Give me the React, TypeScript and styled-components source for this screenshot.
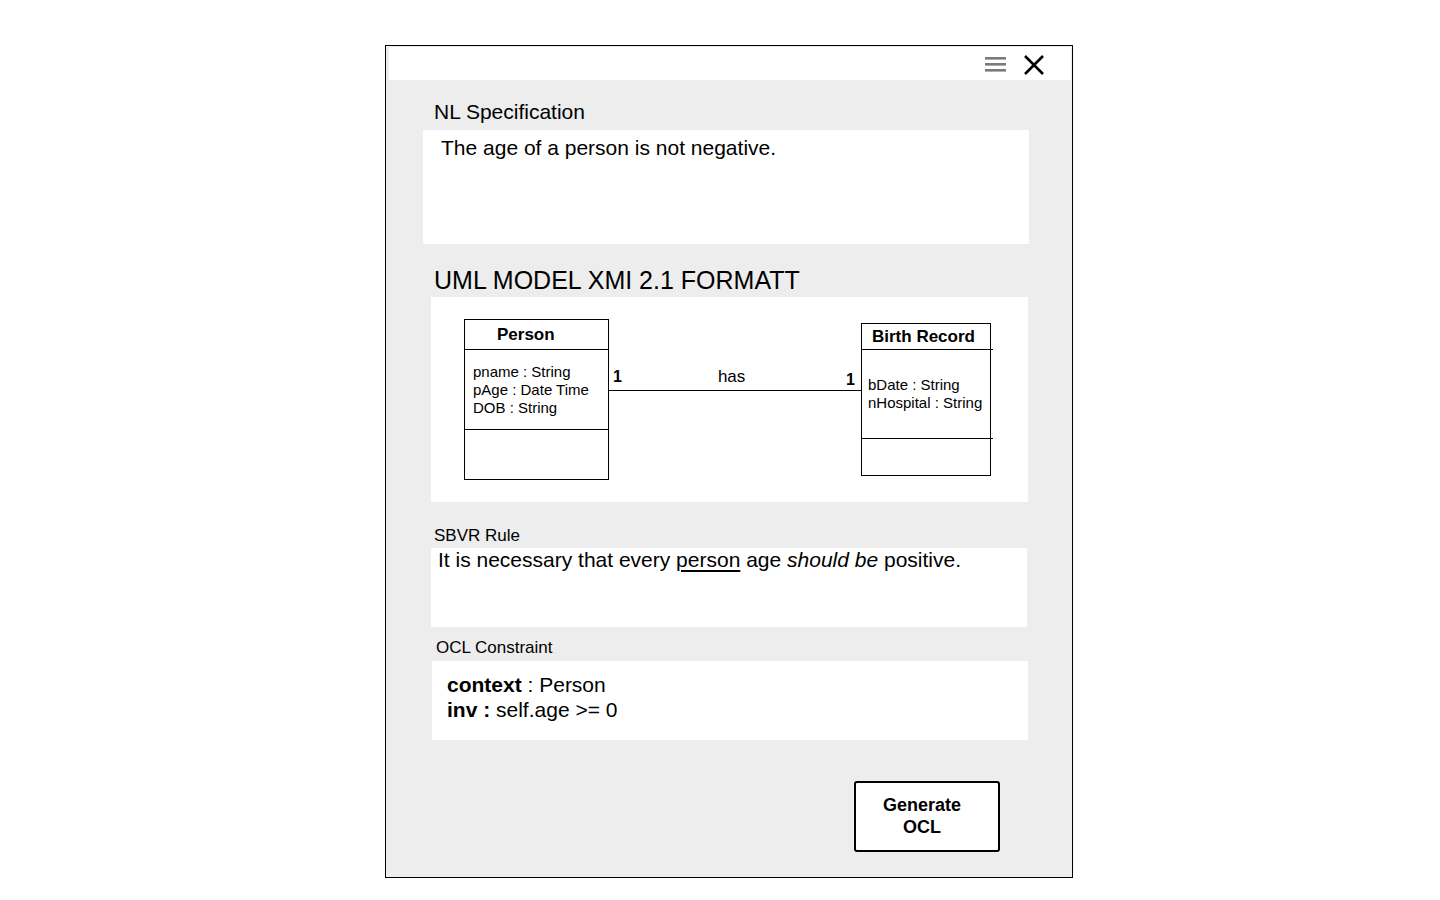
import React from 'react'
import styled, { createGlobalStyle } from 'styled-components'

const GlobalStyle = createGlobalStyle`
  html, body {
    margin: 0;
    padding: 0;
    background: #ffffff;
    font-family: "Liberation Sans", Arial, sans-serif;
    color: #000000;
  }
`

const MenuIcon = () => (
  <svg width="22" height="15" viewBox="0 0 22 15">
    <rect x="0" y="0" width="21" height="2.6" fill="#7a7a7a" />
    <rect x="0" y="6" width="21" height="2.6" fill="#7a7a7a" />
    <rect x="0" y="12" width="21" height="2.6" fill="#7a7a7a" />
  </svg>
)

const CloseIcon = () => (
  <svg width="22" height="22" viewBox="0 0 22 22">
    <path d="M2 2 L20 20 M20 2 L2 20" stroke="#000" strokeWidth="2.6" strokeLinecap="butt" />
  </svg>
)

const App: React.FC = () => {
  return (
    <Page>
      <GlobalStyle />
      <Frame>
        <TitleBar>
          <MenuIcon />
          <CloseIcon />
        </TitleBar>

        <Label size={21} indent={48} gap={20}>NL Specification</Label>
        <NlBox>The age of a person is not negative.</NlBox>

        <Label size={25} indent={48} gap={21} lh={30}>UML MODEL XMI 2.1 FORMATT</Label>
        <DiagramBox>
          <ClassBox width={145}>
            <ClassName pad={32} height={29}>Person</ClassName>
            <Attributes height={80} top={13}>
              <div>pname : String</div>
              <div>pAge : Date Time</div>
              <div>DOB : String</div>
            </Attributes>
            <Methods height={49} />
          </ClassBox>

          <Association>
            <Ends>
              <Multiplicity>1</Multiplicity>
              <RoleName>has</RoleName>
              <Multiplicity shift={3}>1</Multiplicity>
            </Ends>
            <Line />
          </Association>

          <ClassBox width={130} offset={4} overhang>
            <ClassName pad={10} height={25}>Birth Record</ClassName>
            <Attributes height={89} top={26} pad={6}>
              <div>bDate : String</div>
              <div>nHospital : String</div>
            </Attributes>
            <Methods height={36} />
          </ClassBox>
        </DiagramBox>

        <Label size={17} indent={48} gap={24} lh={20}>SBVR Rule</Label>
        <RuleBox>
          It is necessary that every <u>person</u> age <i>should be</i> positive.
        </RuleBox>

        <Label size={17} indent={50} gap={11} lh={20}>OCL Constraint</Label>
        <OclBox>
          <div><b>context</b> : Person</div>
          <div><b>inv :</b> self.age &gt;= 0</div>
        </OclBox>

        <GenerateButton>Generate<br />OCL</GenerateButton>
      </Frame>
    </Page>
  )
}

const Page = styled.div`
  padding: 45px 0 0 385px;
  height: 855px;
`

const Frame = styled.div`
  box-sizing: border-box;
  width: 688px;
  height: 833px;
  border: 1px solid #000000;
  background: #ededed;
  display: flex;
  flex-direction: column;
  align-items: flex-start;
`

const TitleBar = styled.div`
  align-self: stretch;
  height: 33px;
  margin: 1px 1px 0 3px;
  background: #ffffff;
  display: flex;
  justify-content: flex-end;
  align-items: center;
  gap: 16px;
  padding-right: 26px;

  svg:first-child {
    margin-top: 1px;
  }
  svg:last-child {
    margin-top: 3px;
  }
`

const Label = styled.div<{ size: number; indent: number; gap: number; lh?: number }>`
  font-size: ${p => p.size}px;
  line-height: ${p => p.lh || 24}px;
  margin-left: ${p => p.indent}px;
  margin-top: ${p => p.gap}px;
`

const NlBox = styled.div`
  box-sizing: border-box;
  width: 606px;
  height: 114px;
  margin: 6px 0 0 37px;
  padding: 6px 18px;
  background: #ffffff;
  font-size: 21px;
  line-height: 24px;
`

const DiagramBox = styled.div`
  box-sizing: border-box;
  width: 597px;
  height: 205px;
  margin: 2px 0 0 45px;
  padding: 22px 0 0 33px;
  background: #ffffff;
  display: flex;
  align-items: flex-start;
`

const ClassBox = styled.div<{ width: number; offset?: number; overhang?: boolean }>`
  box-sizing: border-box;
  width: ${p => p.width}px;
  margin-top: ${p => p.offset || 0}px;
  border: 1px solid #000000;
  display: flex;
  flex-direction: column;

  & > div + div {
    border-top: 1px solid #000000;
    margin-right: ${p => (p.overhang ? '-3px' : '0')};
    padding-right: ${p => (p.overhang ? '3px' : '0')};
  }
`

const ClassName = styled.div<{ pad: number; height: number }>`
  height: ${p => p.height}px;
  padding-left: ${p => p.pad}px;
  font-size: 17px;
  font-weight: bold;
  line-height: ${p => p.height}px;
`

const Attributes = styled.div<{ height: number; top: number; pad?: number }>`
  box-sizing: border-box;
  height: ${p => p.height}px;
  padding-top: ${p => p.top}px;
  padding-left: ${p => p.pad || 8}px;
  font-size: 15px;
  line-height: 18px;
`

const Methods = styled.div<{ height: number }>`
  height: ${p => p.height}px;
`

const Association = styled.div`
  width: 252px;
  margin-top: 48px;
  display: flex;
  flex-direction: column;
`

const Ends = styled.div`
  height: 23px;
  display: flex;
  align-items: flex-start;
  padding: 0 6px 0 4px;
`

const Multiplicity = styled.span<{ shift?: number }>`
  font-size: 16px;
  font-weight: bold;
  line-height: 20px;
  margin-top: ${p => p.shift || 0}px;
`

const RoleName = styled.span`
  flex: 1;
  padding-left: 96px;
  font-size: 17px;
  line-height: 20px;
`

const Line = styled.div`
  border-top: 1px solid #000000;
`

const RuleBox = styled.div`
  box-sizing: border-box;
  width: 596px;
  height: 79px;
  margin: 2px 0 0 45px;
  padding: 0 7px;
  background: #ffffff;
  font-size: 21px;
  line-height: 24px;

  u {
    text-underline-offset: 3px;
  }
`

const OclBox = styled.div`
  box-sizing: border-box;
  width: 596px;
  height: 79px;
  margin: 3px 0 0 46px;
  padding: 11px 15px;
  background: #ffffff;
  font-size: 21px;
  line-height: 25px;
`

const GenerateButton = styled.button`
  box-sizing: border-box;
  width: 146px;
  height: 71px;
  margin: 41px 0 0 468px;
  padding: 0 10px 2px 0;
  background: #ffffff;
  border: 2px solid #000000;
  border-radius: 3px;
  font-family: "Liberation Sans", Arial, sans-serif;
  font-size: 18px;
  font-weight: bold;
  line-height: 22px;
  color: #000000;
  text-align: center;
`

export default App
